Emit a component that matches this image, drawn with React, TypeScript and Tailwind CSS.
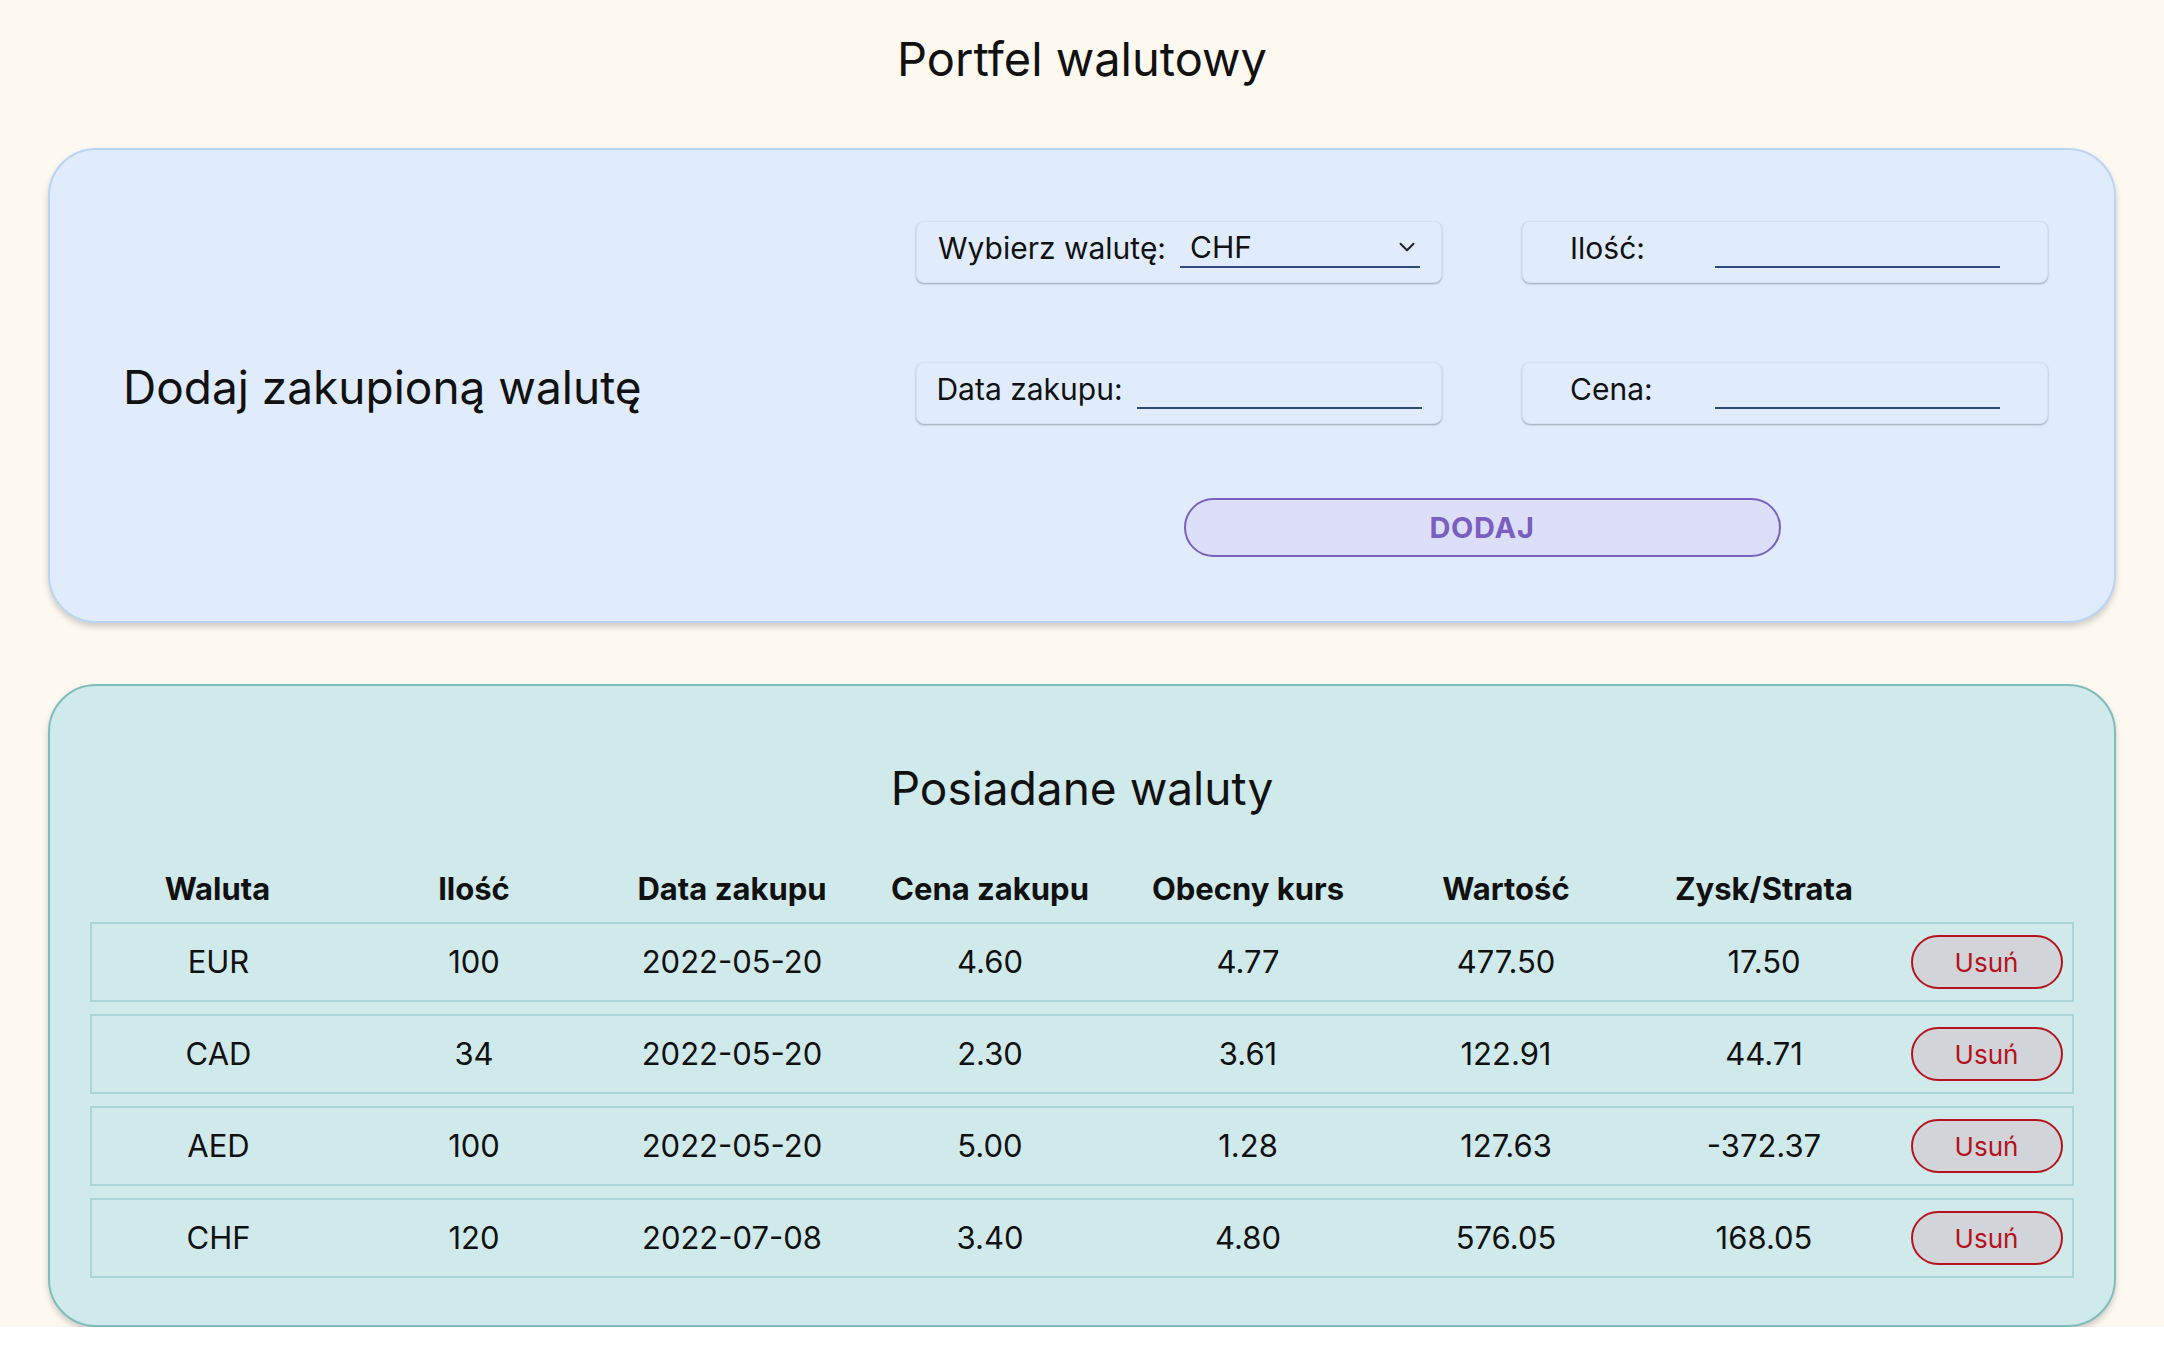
import { ChevronDown } from "lucide-react";

const rows = [
  { waluta: "EUR", ilosc: "100", data: "2022-05-20", cena: "4.60", kurs: "4.77", wartosc: "477.50", zysk: "17.50" },
  { waluta: "CAD", ilosc: "34", data: "2022-05-20", cena: "2.30", kurs: "3.61", wartosc: "122.91", zysk: "44.71" },
  { waluta: "AED", ilosc: "100", data: "2022-05-20", cena: "5.00", kurs: "1.28", wartosc: "127.63", zysk: "-372.37" },
  { waluta: "CHF", ilosc: "120", data: "2022-07-08", cena: "3.40", kurs: "4.80", wartosc: "576.05", zysk: "168.05" },
];

const headers = ["Waluta", "Ilość", "Data zakupu", "Cena zakupu", "Obecny kurs", "Wartość", "Zysk/Strata"];

function Field({ label, children }: { label: string; children: React.ReactNode }) {
  return (
    <div className="flex h-[62px] items-center justify-center gap-[14px] rounded-lg border border-[#d5e2f4] bg-[#e0ecfc] pt-[7px] pb-[15px] shadow-[0_1px_2px_rgba(0,0,0,0.3)]">
      <span className="min-w-[131px] text-[30px] leading-[40px] text-[#111]">{label}</span>
      {children}
    </div>
  );
}

function TextInput() {
  return <div className="h-[40px] w-[285px] border-b-2 border-[#2d4a7b]" />;
}

export default function App() {
  return (
    <div className="bg-[#fdf9f1] font-['Inter',sans-serif] text-[#111]">
      <h1 className="pt-[30px] text-center text-[47px] leading-[58px] font-normal">Portfel walutowy</h1>

      {/* formularz */}
      <section className="mx-[48px] mt-[60px] flex rounded-[48px] border-2 border-[#b9d4f5] bg-[#e0ecfc] pt-[71px] pb-[64px] shadow-[0_4px_6px_rgba(0,0,0,0.18)]">
        <div className="flex flex-1 items-center pb-[5px] pl-[73px]">
          <h2 className="text-[46px] leading-[56px] font-normal">Dodaj zakupioną walutę</h2>
        </div>
        <div className="mr-[66px] w-[1132px]">
          <div className="grid grid-cols-2 gap-x-[80px] gap-y-[79px]">
            <Field label="Wybierz walutę:">
              <div className="flex h-[40px] w-[240px] items-center justify-between border-b-2 border-[#2d4a7b] pl-[10px]">
                <span className="text-[30px] leading-[40px]">CHF</span>
                <ChevronDown className="h-[26px] w-[26px] text-[#222]" strokeWidth={1.8} />
              </div>
            </Field>
            <Field label="Ilość:">
              <TextInput />
            </Field>
            <Field label="Data zakupu:">
              <TextInput />
            </Field>
            <Field label="Cena:">
              <TextInput />
            </Field>
          </div>
          <div className="mt-[74px] flex justify-center">
            <button className="h-[59px] w-[597px] rounded-full border-2 border-[#7a5fc0] bg-[#dcdff7] text-[29px] font-bold tracking-wide text-[#7a5fc0]">
              DODAJ
            </button>
          </div>
        </div>
      </section>

      {/* tabela */}
      <section className="mx-[48px] mt-[61px] rounded-[48px] border-2 border-[#7ebdbd] bg-[#d0e9ea] px-[40px] pt-[75px] pb-[47px] shadow-[0_4px_6px_rgba(0,0,0,0.18)]">
        <h2 className="text-center text-[46px] leading-[54px] font-normal">Posiadane waluty</h2>
        <div className="mt-[54px] grid grid-cols-[255px_repeat(6,258px)_1fr] text-center text-[31px] leading-[40px] font-bold">
          {headers.map((h) => (
            <div key={h}>{h}</div>
          ))}
          <div />
        </div>
        <div className="mt-[13px] flex flex-col gap-[12px]">
          {rows.map((r) => (
            <div
              key={r.waluta}
              className="grid h-[80px] grid-cols-[253px_repeat(6,258px)_1fr] items-center border-2 border-[#a9d5d8] text-center text-[31px]"
            >
              <div>{r.waluta}</div>
              <div>{r.ilosc}</div>
              <div>{r.data}</div>
              <div>{r.cena}</div>
              <div>{r.kurs}</div>
              <div>{r.wartosc}</div>
              <div>{r.zysk}</div>
              <div className="flex justify-center pl-[8px]">
                <button className="h-[54px] w-[152px] rounded-full border-2 border-[#b5121d] bg-[#d1d5da] text-[26px] text-[#b5121d]">
                  Usuń
                </button>
              </div>
            </div>
          ))}
        </div>
      </section>
    </div>
  );
}
